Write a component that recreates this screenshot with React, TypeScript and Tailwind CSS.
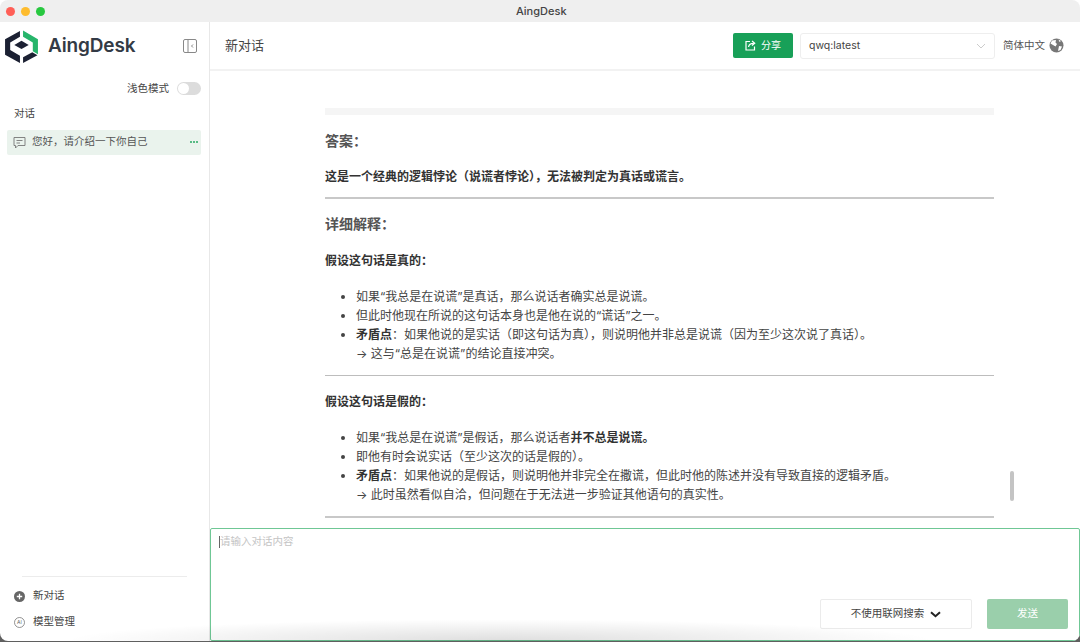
const Logo = () => (
  <svg width="37" height="35" viewBox="0 0 36 34">
    <path d="M16.5 2 L2 10 V25 L16.5 33 V26 L7 20.5 V13 L16.5 7.5Z" fill="#1c2133" />
    <path d="M19.5 1.5 L34 10 V24.5 L29 21.5 V13 L19.5 7.5Z" fill="#27b56b" />
    <path d="M19.5 33 L33.5 25.5 L28.5 22.5 L19.5 27.5Z" fill="#1c2133" />
    <path d="M18 11.5 L25 15.5 L18 19.5 L11 15.5Z" fill="#1c2133" />
  </svg>
);

const Traffic = () => (
  <div className="flex gap-[6px] pl-[6px]">
    <span className="h-[9px] w-[9px] rounded-full bg-[#ff5f57]" />
    <span className="h-[9px] w-[9px] rounded-full bg-[#febc2e]" />
    <span className="h-[9px] w-[9px] rounded-full bg-[#28c840]" />
  </div>
);

const Bullet = ({ children }: { children: React.ReactNode }) => (
  <li className="h-[19px] leading-[19px] whitespace-nowrap">{children}</li>
);

export default function App() {
  return (
    <div className="h-[642px] w-[1080px] overflow-hidden bg-[linear-gradient(#ffffff_50%,#5f5f5f_50%)]">
      <div
        className="relative flex h-[641px] w-[1080px] flex-col overflow-hidden rounded-[8px] bg-white text-[#333]"
        style={{ fontFamily: '"Inter", "Noto Sans CJK SC", sans-serif' }}
      >
        {/* title bar */}
        <div className="relative flex h-[22px] flex-none items-center bg-[#efefef]">
          <Traffic />
          <span className="absolute left-[516px] text-[11px] font-medium text-[#444]">AingDesk</span>
        </div>

        <div className="flex min-h-0 flex-1">
          {/* sidebar */}
          <aside className="flex w-[210px] flex-none flex-col border-r border-[#e8e8e8] text-[10.5px]">
            <div className="flex h-[48px] items-center pl-[3px] pr-[12px]">
              <Logo />
              <span className="ml-[8px] text-[19px] font-semibold tracking-[-0.15px] text-[#333a45]">AingDesk</span>
              <svg className="ml-auto" width="14" height="14" viewBox="0 0 14 14" fill="none" stroke="#888" strokeWidth="1">
                <rect x="0.5" y="0.5" width="13" height="13" rx="1.5" />
                <path d="M5 0.5V13.5" />
                <path d="M10 5.5 L8.5 7 L10 8.5" />
              </svg>
            </div>
            <div className="mt-[11px] flex items-center justify-end gap-[8px] pr-[8px]">
              <span className="text-[#444]">浅色模式</span>
              <span className="flex h-[13px] w-[24px] items-center rounded-full bg-[#dcdcdc] pl-[1px]">
                <span className="h-[11px] w-[11px] rounded-full bg-white" />
              </span>
            </div>
            <div className="mt-[9px] pl-[14px] leading-[16px] text-[#444]">对话</div>
            <div className="ml-[7px] mr-[8px] mt-[8px] flex h-[25px] items-center rounded-[2px] bg-[#eaf3ed] pl-[6px] pr-[3px]">
              <svg width="13" height="13" viewBox="0 0 13 13" fill="none" stroke="#777" strokeWidth="0.9">
                <path d="M1 1.5H12V9.5H5L2.5 12V9.5H1Z" strokeLinejoin="round" />
                <path d="M3.5 4.5H9.5M3.5 7H7" />
              </svg>
              <span className="ml-[6px] text-[#555]">您好，请介绍一下你自己</span>
              <span className="ml-auto flex gap-[1px]">
                <i className="h-[2px] w-[2px] rounded-full bg-[#27a862]" />
                <i className="h-[2px] w-[2px] rounded-full bg-[#27a862]" />
                <i className="h-[2px] w-[2px] rounded-full bg-[#27a862]" />
              </span>
            </div>

            <div className="mt-auto px-[22px]">
              <div className="h-px bg-[#ececec]" />
            </div>
            <div className="mt-[6px] flex h-[26px] items-center gap-[8px] pl-[14px] text-[#444]">
              <svg width="11" height="11" viewBox="0 0 11 11">
                <circle cx="5.5" cy="5.5" r="5.5" fill="#666" />
                <path d="M5.5 2.8V8.2M2.8 5.5H8.2" stroke="#fff" strokeWidth="1.3" />
              </svg>
              新对话
            </div>
            <div className="mb-[6px] flex h-[26px] items-center gap-[8px] pl-[14px] text-[#444]">
              <svg width="11" height="11" viewBox="0 0 11 11" fill="none">
                <circle cx="5.5" cy="5.5" r="5" stroke="#666" strokeWidth="0.7" />
                <text x="5.5" y="7.4" textAnchor="middle" fontSize="5" fill="#666">AI</text>
              </svg>
              模型管理
            </div>
          </aside>

          {/* main */}
          <main className="flex min-w-0 flex-1 flex-col">
            <header className="flex h-[49px] flex-none items-center border-b-2 border-[#f2f2f2] pl-[15px] pr-[16px]">
              <span className="text-[13px] text-[#444]">新对话</span>
              <button className="ml-auto flex h-[25px] w-[60px] items-center justify-center gap-[5px] rounded-[2px] bg-[#18a058] text-[10px] text-white">
                <svg width="11" height="11" viewBox="0 0 11 11" fill="none" stroke="#fff" strokeWidth="1.2">
                  <path d="M5 1.5H1V10H9.5V6.5" />
                  <path d="M3.5 7C4 4.5 6 3.3 8.5 3.3M7 1L9.7 3.3L7 5.6" />
                </svg>
                分享
              </button>
              <div className="ml-[7px] flex h-[26px] w-[195px] items-center justify-between rounded-[3px] border border-[#eeeeee] pl-[8px] pr-[8px] text-[10.5px] text-[#444]">
                qwq:latest
                <svg width="10" height="6" viewBox="0 0 10 6" fill="none" stroke="#ccc" strokeWidth="1">
                  <path d="M1 1L5 5L9 1" />
                </svg>
              </div>
              <span className="ml-[8px] text-[10.5px] text-[#555]">简体中文</span>
              <svg className="ml-[4px]" width="15" height="15" viewBox="0 0 15 15">
                <circle cx="7.5" cy="7.5" r="7" fill="#777" />
                <path d="M3 2.5L7 2L6.5 4.5L8 6L6.5 8.5L4 7L1.5 5.5Z" fill="#fff" />
                <path d="M10 8L13 8.5L11.5 12L9 13Z" fill="#fff" />
                <path d="M9.5 1.5L12 3L10.5 4Z" fill="#fff" />
              </svg>
            </header>

            <div className="relative min-h-0 flex-1 overflow-hidden pl-[115px] pr-[86px] pt-[37px]">
              <div className="h-[7px] bg-[#f5f5f5]" />
              <h3 className="mt-[16px] text-[14px] font-semibold leading-[20px] text-[#555]">答案：</h3>
              <p className="mt-[16px] text-[12px] font-semibold leading-[19px] text-[#333]">
                这是一个经典的逻辑悖论（说谎者悖论），无法被判定为真话或谎言。
              </p>
              <hr className="mt-[11px] border-t-2 border-[#c8c8c8]" />
              <h3 className="mt-[15px] text-[14px] font-semibold leading-[20px] text-[#555]">详细解释：</h3>
              <h4 className="mt-[17px] text-[12px] font-semibold leading-[19px] text-[#333]">假设这句话是真的：</h4>
              <ul className="mt-[17px] list-disc pl-[31px] text-[12px] text-[#444]">
                <Bullet>如果“我总是在说谎”是真话，那么说话者确实总是说谎。</Bullet>
                <Bullet>但此时他现在所说的这句话本身也是他在说的“谎话”之一。</Bullet>
                <Bullet><b className="font-semibold text-[#333]">矛盾点</b>：如果他说的是实话（即这句话为真），则说明他并非总是说谎（因为至少这次说了真话）。</Bullet>
                <li className="h-[19px] list-none leading-[19px]">→ 这与“总是在说谎”的结论直接冲突。</li>
              </ul>
              <hr className="mt-[12px] border-t border-[#bdbdbd]" />
              <h4 className="mt-[16px] text-[12px] font-semibold leading-[19px] text-[#333]">假设这句话是假的：</h4>
              <ul className="mt-[17px] list-disc pl-[31px] text-[12px] text-[#444]">
                <Bullet>如果“我总是在说谎”是假话，那么说话者<b className="font-semibold text-[#333]">并不总是说谎。</b></Bullet>
                <Bullet>即他有时会说实话（至少这次的话是假的）。</Bullet>
                <Bullet><b className="font-semibold text-[#333]">矛盾点</b>：如果他说的是假话，则说明他并非完全在撒谎，但此时他的陈述并没有导致直接的逻辑矛盾。</Bullet>
                <li className="h-[19px] list-none leading-[19px]">→ 此时虽然看似自洽，但问题在于无法进一步验证其他语句的真实性。</li>
              </ul>
              <hr className="mt-[12px] border-t-2 border-[#c8c8c8]" />
              {/* overlay scrollbar */}
              <div className="absolute left-[800px] top-[400px] h-[30px] w-[4px] rounded-full bg-[#c4c4c4]" />
            </div>

            <div className="relative h-[113px] flex-none rounded-[2px] border border-[#6fc795] px-[8px] pt-[5px]">
              <div className="flex items-center text-[10.5px] leading-[16px] text-[#c4c4c4]">
                <span className="h-[12px] w-px bg-[#666]" />
                请输入对话内容
              </div>
              <div className="absolute bottom-[11px] right-[11px] flex gap-[15px]">
                <button className="flex h-[30px] w-[152px] items-center justify-center gap-[6px] rounded-[2px] border border-[#ebebeb] text-[10.5px] text-[#444]">
                  不使用联网搜索
                  <svg width="11" height="7" viewBox="0 0 11 7" fill="none" stroke="#222" strokeWidth="2">
                    <path d="M1 1.2L5.5 5.2L10 1.2" />
                  </svg>
                </button>
                <button className="h-[30px] w-[81px] rounded-[2px] bg-[#9acfab] text-[10.5px] text-white">发送</button>
              </div>
            </div>
          </main>
        </div>
        {/* soft shadow from the window underneath */}
        <div className="pointer-events-none absolute bottom-0 left-[60px] h-[22px] w-[880px] bg-[radial-gradient(ellipse_at_bottom,rgba(0,0,0,0.13),transparent_70%)]" />
      </div>
    </div>
  );
}
